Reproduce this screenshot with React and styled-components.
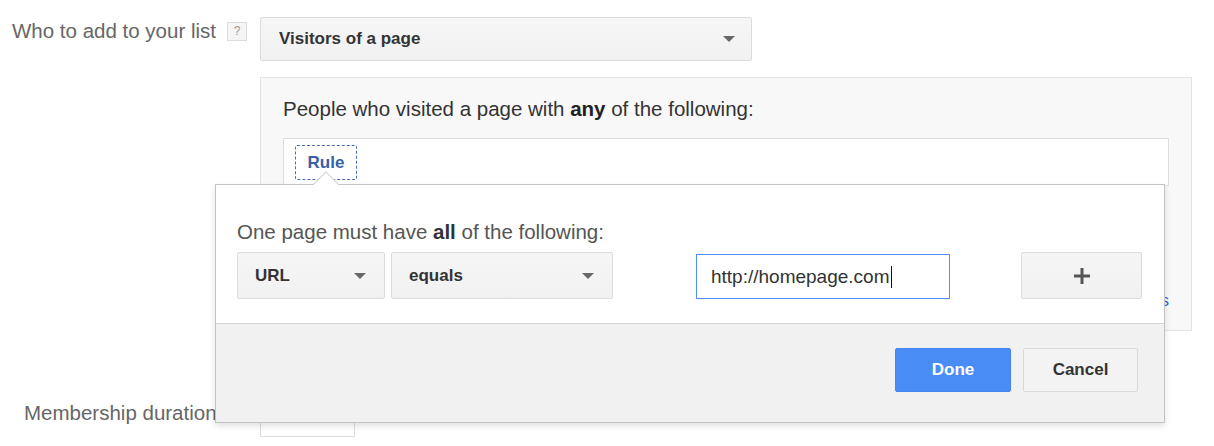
import React from "react";
import styled, { createGlobalStyle } from "styled-components";

const GlobalStyle = createGlobalStyle`
  *, *::before, *::after { box-sizing: border-box; }
  body {
    margin: 0;
    background: #fff;
    font-family: "Liberation Sans", Arial, sans-serif;
    color: #333;
  }
`;

const Page = styled.div`
  padding: 17px 0 0 12px;
`;

const FormRow = styled.div`
  display: flex;
  align-items: flex-start;
  margin-top: ${p => p.$gap || 0}px;
`;

const Label = styled.div`
  width: 248px;
  padding: ${p => p.$top || 0}px 0 0 ${p => p.$indent || 0}px;
  display: flex;
  align-items: center;
  gap: 11px;
  font-size: 20.5px;
  line-height: 24px;
  color: #666;
  white-space: nowrap;
`;

const Help = styled.span`
  width: 20px;
  height: 19px;
  display: inline-flex;
  align-items: center;
  justify-content: center;
  background: #f5f5f5;
  border: 1px solid #dcdcdc;
  font-size: 12px;
  line-height: 1;
  color: #999;
`;

const Field = styled.div`
  position: relative;
  display: flex;
  flex-direction: column;
`;

const Select = styled.div`
  width: ${p => p.$w}px;
  height: ${p => p.$h}px;
  margin-left: ${p => p.$ml || 0}px;
  display: flex;
  align-items: center;
  justify-content: space-between;
  padding: 0 ${p => p.$pr || 18}px 0 ${p => p.$pl || 17}px;
  background: linear-gradient(#f6f6f6, #f1f1f1);
  border: 1px solid #dcdcdc;
  border-radius: 2px;
  font-size: 17px;
  font-weight: bold;
  color: #333;
`;

const Arrow = styled.span`
  width: 0;
  height: 0;
  border-left: 6px solid transparent;
  border-right: 6px solid transparent;
  border-top: 6px solid #686868;
`;

const Panel = styled.div`
  margin-top: 16px;
  width: 932px;
  height: 254px;
  display: flex;
  flex-direction: column;
  padding: 19px 22px 19px 22px;
  background: #f8f8f8;
  border: 1px solid #e3e3e3;
`;

const PanelTitle = styled.div`
  font-size: 20.5px;
  line-height: 24px;
  color: #333;
  b { color: #222; }
`;

const RuleBox = styled.div`
  margin-top: 17px;
  height: 48px;
  padding: 6px 11px;
  background: #fff;
  border: 1px solid #dedede;
`;

const RuleTab = styled.span`
  display: inline-flex;
  align-items: center;
  justify-content: center;
  width: 62px;
  height: 35px;
  border: 1px dashed #4a6db3;
  border-radius: 2px;
  font-size: 17px;
  font-weight: bold;
  color: #3a5fab;
`;

const PanelLink = styled.div`
  margin-top: auto;
  text-align: right;
  font-size: 16px;
  line-height: 20px;
  color: #3366cc;
`;

const Popover = styled.div`
  position: absolute;
  left: -45px;
  top: 167px;
  width: 950px;
  background: #fff;
  border: 1px solid #c3c3c3;
  box-shadow: 0 3px 6px rgba(0, 0, 0, 0.12);
  z-index: 2;

  &::before {
    content: "";
    position: absolute;
    top: -10px;
    left: 101px;
    width: 18px;
    height: 18px;
    background: #fff;
    border-top: 1px solid #d3d3d3;
    border-left: 1px solid #d3d3d3;
    transform: rotate(45deg);
  }
`;

const PopBody = styled.div`
  padding: 35px 22px 24px 21px;
`;

const PopTitle = styled.div`
  font-size: 20.5px;
  line-height: 24px;
  color: #555;
  b { color: #333; }
`;

const RuleRow = styled.div`
  margin-top: 8px;
  display: flex;
  align-items: flex-end;
`;

const TextInput = styled.div`
  margin-left: 83px;
  width: 254px;
  height: 45px;
  display: flex;
  align-items: center;
  padding-left: 14px;
  border: 1px solid #4d90fe;
  font-size: 19px;
  color: #333;
`;

const Caret = styled.span`
  display: inline-block;
  width: 1px;
  height: 22px;
  margin-left: 1px;
  background: #111;
`;

const PlusButton = styled.div`
  margin-left: 71px;
  width: 121px;
  height: 47px;
  display: flex;
  align-items: center;
  justify-content: center;
  background: linear-gradient(#f5f5f5, #f1f1f1);
  border: 1px solid #dcdcdc;
  border-radius: 2px;
`;

const PopFooter = styled.div`
  display: flex;
  justify-content: flex-end;
  gap: 12px;
  padding: 24px 26px 30px;
  background: #f1f1f1;
  border-top: 1px solid #d3d3d3;
`;

const Button = styled.div`
  width: ${p => p.$w}px;
  height: 44px;
  display: flex;
  align-items: center;
  justify-content: center;
  border-radius: 2px;
  font-size: 17px;
  font-weight: bold;
  background: ${p => (p.$primary ? "#4a8cf6" : "#f3f3f3")};
  border: 1px solid ${p => (p.$primary ? "#4585f0" : "#d9d9d9")};
  color: ${p => (p.$primary ? "#fff" : "#333")};
`;

const DurationBox = styled.div`
  width: 95px;
  height: 42px;
  background: #fff;
  border: 1px solid #dcdcdc;
`;

const PlusIcon = () => (
  <svg width="16" height="16" viewBox="0 0 16 16">
    <rect x="6.5" y="0" width="3" height="16" fill="#555" />
    <rect x="0" y="6.5" width="16" height="3" fill="#555" />
  </svg>
);

export default function App() {
  return (
    <>
      <GlobalStyle />
      <Page>
        <FormRow>
          <Label $top={2}>
            Who to add to your list <Help>?</Help>
          </Label>
          <Field>
            <Select $w={492} $h={44} $pl={18} $pr={16}>
              Visitors of a page <Arrow />
            </Select>
            <Panel>
              <PanelTitle>
                People who visited a page with <b>any</b> of the following:
              </PanelTitle>
              <RuleBox>
                <RuleTab>Rule</RuleTab>
              </RuleBox>
              <PanelLink>Add rules</PanelLink>
            </Panel>

            <Popover>
              <PopBody>
                <PopTitle>
                  One page must have <b>all</b> of the following:
                </PopTitle>
                <RuleRow>
                  <Select $w={148} $h={47}>
                    URL <Arrow />
                  </Select>
                  <Select $w={222} $h={47} $ml={6}>
                    equals <Arrow />
                  </Select>
                  <TextInput>
                    http://homepage.com
                    <Caret />
                  </TextInput>
                  <PlusButton>
                    <PlusIcon />
                  </PlusButton>
                </RuleRow>
              </PopBody>
              <PopFooter>
                <Button $primary $w={116}>Done</Button>
                <Button $w={115}>Cancel</Button>
              </PopFooter>
            </Popover>
          </Field>
        </FormRow>

        <FormRow $gap={64}>
          <Label $top={6} $indent={12}>
            Membership duration
          </Label>
          <Field>
            <DurationBox />
          </Field>
        </FormRow>
      </Page>
    </>
  );
}
